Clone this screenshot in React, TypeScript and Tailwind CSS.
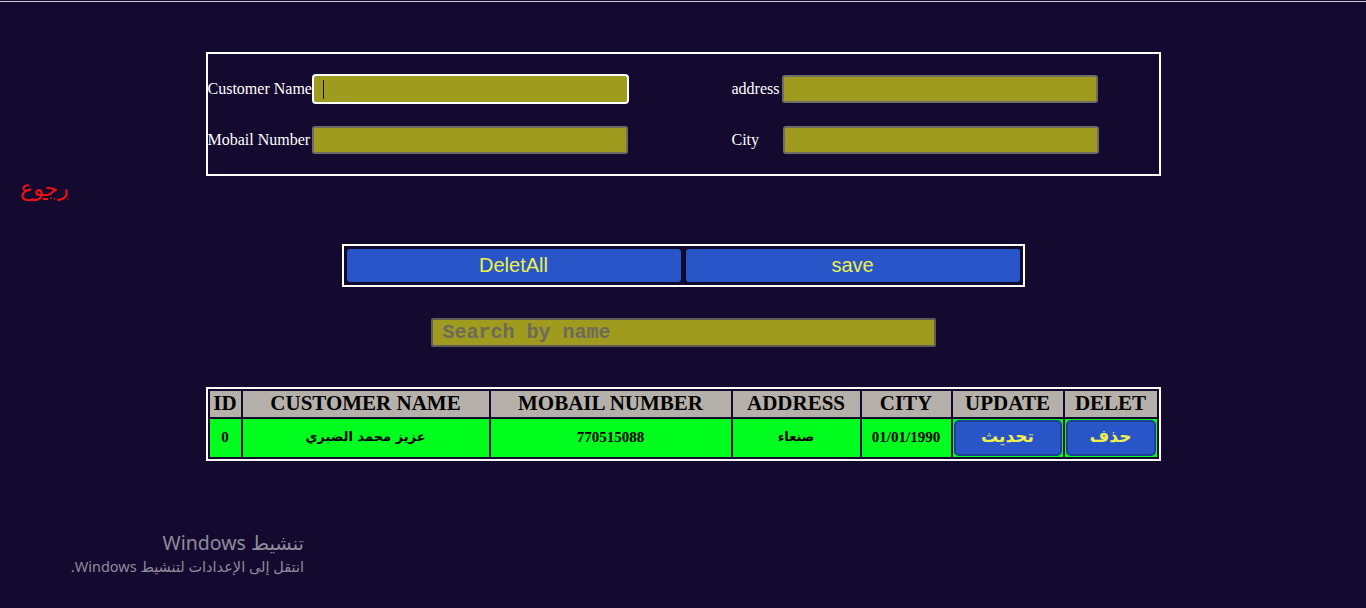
import React from "react";

const inputCls =
  "h-[28px] w-[316px] rounded-[3px] border-2 border-[#6f6c66] bg-[#9f9b1e] outline-none";

export default function App() {
  return (
    <div
      className="relative h-[608px] w-full overflow-hidden bg-[#140a2f]"
      style={{ fontFamily: '"Liberation Serif", "DejaVu Serif", serif' }}
    >
      <div className="h-px bg-[#140a2f]" />
      <div className="h-px bg-[#cfcdd6]" />

      {/* form */}
      <div className="mx-auto mt-[50px] w-[955px] border-2 border-white pt-[20px] pb-[20px]">
        <div className="grid grid-cols-[104px_318px_102px_50px_318px] items-center gap-y-[22px] text-[16px] text-white">
          <label className="whitespace-nowrap">Customer Name</label>
          <div className="relative">
            <div className="h-[30px] w-[317px] rounded-[4px] border-2 border-white bg-[#9f9b1e] p-0" />
            <div className="absolute left-[11px] top-[6px] h-[19px] w-px bg-[#111]" />
          </div>
          <div />
          <label className="whitespace-nowrap">address</label>
          <input className={inputCls} />

          <label className="whitespace-nowrap">Mobail Number</label>
          <input className={inputCls} />
          <div />
          <label className="whitespace-nowrap">City</label>
          <input className={inputCls + " ml-px"} />
        </div>
      </div>

      {/* back link */}
      <div className="ml-[20px] h-[30px]">
        <a
          href="#"
          dir="rtl"
          className="text-[22px] leading-[26px] text-[#ee1111] underline"
          style={{ fontFamily: '"DejaVu Sans", sans-serif' }}
        >
          رجوع
        </a>
      </div>

      {/* buttons */}
      <div className="mx-auto mt-[38px] flex h-[43px] w-[683px] gap-[1px] border-2 border-white p-[1px]">
        {["DeletAll", "save"].map((t) => (
          <button
            key={t}
            className="flex-1 rounded-[5px] border-2 border-[#0d0a2a] bg-[#2856c8] pb-[2px] text-[20px] leading-[24px] text-[#eef04c]"
            style={{ fontFamily: '"Liberation Sans", Arial, sans-serif' }}
          >
            {t}
          </button>
        ))}
      </div>

      {/* search */}
      <div className="mt-[31px] flex justify-center">
        <input
          placeholder="Search by name"
          className="h-[29px] w-[505px] rounded-[2px] border-2 border-[#5f5c56] bg-[#9f9b1e] pl-[10px] text-[20px] font-bold outline-none placeholder:text-[#6d6a5c]"
          style={{ fontFamily: '"Liberation Mono", "Courier New", monospace' }}
        />
      </div>

      {/* table */}
      <div className="mt-[40px] flex justify-center">
        <table className="w-[955px] table-fixed border-separate border-spacing-[2px] border-2 border-white">
          <colgroup>
            <col className="w-[31px]" />
            <col className="w-[246px]" />
            <col className="w-[240px]" />
            <col className="w-[127px]" />
            <col className="w-[89px]" />
            <col className="w-[110px]" />
            <col className="w-[92px]" />
          </colgroup>
          <thead>
            <tr className="h-[26px] bg-[#b5b1aa] text-[21px] leading-[24px] font-bold text-black">
              <th className="p-0 pb-[2px] whitespace-nowrap">ID</th>
              <th className="p-0 pb-[2px] whitespace-nowrap">CUSTOMER NAME</th>
              <th className="p-0 pb-[2px] whitespace-nowrap">MOBAIL NUMBER</th>
              <th className="p-0 pb-[2px] whitespace-nowrap">ADDRESS</th>
              <th className="p-0 pb-[2px] whitespace-nowrap">CITY</th>
              <th className="p-0 pb-[2px] whitespace-nowrap">UPDATE</th>
              <th className="p-0 pb-[2px] whitespace-nowrap">DELET</th>
            </tr>
          </thead>
          <tbody>
            <tr className="h-[38px] bg-[#00ff1e] text-center text-[15px] font-bold text-black">
              <td className="p-0 pb-[2px]">0</td>
              <td className="p-0 pb-[2px]" dir="rtl" style={{ fontFamily: '"DejaVu Sans", sans-serif', fontSize: 13 }}>
                عزيز محمد الضبري
              </td>
              <td className="p-0 pb-[2px]">770515088</td>
              <td className="p-0 pb-[2px]" dir="rtl" style={{ fontFamily: '"DejaVu Sans", sans-serif', fontSize: 13 }}>
                صنعاء
              </td>
              <td className="p-0 pb-[2px]">01/01/1990</td>
              <td className="p-[1px]">
                <button
                  className="h-[36px] w-full rounded-[5px] border-2 border-[#1f3f96] bg-[#2856c8] pb-[2px] text-[17px] text-[#eef04c]"
                  style={{ fontFamily: '"DejaVu Sans", sans-serif' }}
                >
                  تحديث
                </button>
              </td>
              <td className="p-[1px]">
                <button
                  className="h-[36px] w-full rounded-[5px] border-2 border-[#1f3f96] bg-[#2856c8] pb-[2px] text-[17px] text-[#eef04c]"
                  style={{ fontFamily: '"DejaVu Sans", sans-serif' }}
                >
                  حذف
                </button>
              </td>
            </tr>
          </tbody>
        </table>
      </div>

      {/* windows watermark overlay */}
      <div
        dir="rtl"
        className="absolute left-0 top-[530px] w-[304px] text-[#8f8b9d]"
        style={{ fontFamily: '"Noto Sans", "DejaVu Sans", sans-serif' }}
      >
        <div className="text-[19.5px] leading-[26px]">تنشيط Windows</div>
        <div className="text-[14.5px] leading-[20px]">انتقل إلى الإعدادات لتنشيط Windows.</div>
      </div>
    </div>
  );
}
